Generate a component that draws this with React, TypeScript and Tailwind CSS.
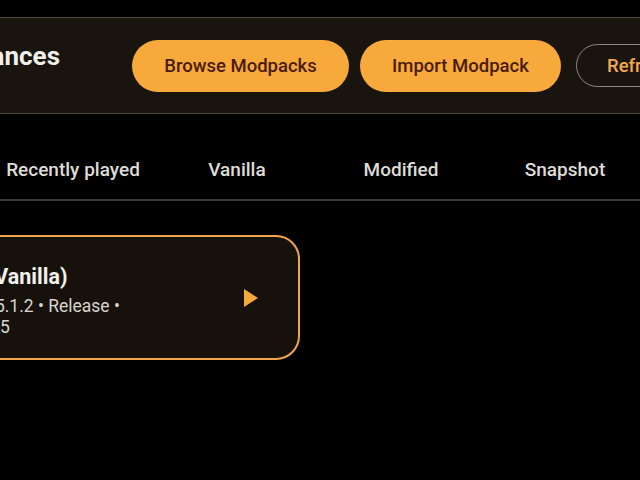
const TABS = ['Recently played', 'Vanilla', 'Modified', 'Snapshot'];

const font = { fontFamily: 'Roboto, "Noto Sans", sans-serif' };

export default function App() {
  return (
    <div
      className="h-[480px] w-[640px] overflow-hidden bg-black pt-[17px] text-[#e4e2de]"
      style={font}
    >
      {/* top bar */}
      <div className="flex h-[97px] items-center border-y border-[#4b463f] bg-[#19150e]">
        <div className="mb-[19px] flex w-[60px] shrink-0 justify-end whitespace-nowrap">
          <h1 className="text-[26px] font-bold leading-[30px] text-[#f2f0ec]">Instances</h1>
        </div>
        <button className="ml-[72px] h-[52px] w-[217px] shrink-0 rounded-full bg-[#f8a93c] pt-[3px] text-[18.5px] font-medium text-[#4a1b0c]">
          Browse Modpacks
        </button>
        <button className="ml-[11px] h-[52px] w-[201px] shrink-0 rounded-full bg-[#f8a93c] pt-[3px] text-[18.5px] font-medium text-[#4a1b0c]">
          Import Modpack
        </button>
        <button className="ml-[15px] h-[43px] w-[140px] shrink-0 rounded-full border border-[#8c877f] pl-[30px] pt-[2px] text-left text-[18.5px] font-medium text-[#f6aa4c]">
          Refresh
        </button>
      </div>

      {/* tabs */}
      <div className="-ml-[9px] flex h-[87px] border-b-2 border-[#3a3a3a] pt-[44px]">
        {TABS.map((t) => (
          <div
            key={t}
            className="w-[164px] shrink-0 text-center text-[19px] font-medium leading-[24px] text-[#dedcd8]"
          >
            {t}
          </div>
        ))}
      </div>

      {/* instance card */}
      <div className="-ml-[80px] mt-[34px] flex h-[125px] w-[380px] items-center rounded-[24px] border-2 border-[#f2a54c] bg-[#16120b] pl-[44px] pr-[39px]">
        <div className="flex-1 whitespace-nowrap pt-[5px]">
          <div className="text-[21.5px] font-bold leading-[28px] text-[#f2f0ec]">N (Vanilla)</div>
          <div className="mt-[5px] text-[17.5px] leading-[21px] text-[#d8d5d0]">1.6.5.1.2 • Release •</div>
          <div className="text-[17.5px] leading-[21px] text-[#d8d5d0]">12.15</div>
        </div>
        <svg width="16" height="20" viewBox="0 0 16 20" className="shrink-0">
          <polygon points="1,1 15,10 1,19" fill="#f8a93c" />
        </svg>
      </div>
    </div>
  );
}
